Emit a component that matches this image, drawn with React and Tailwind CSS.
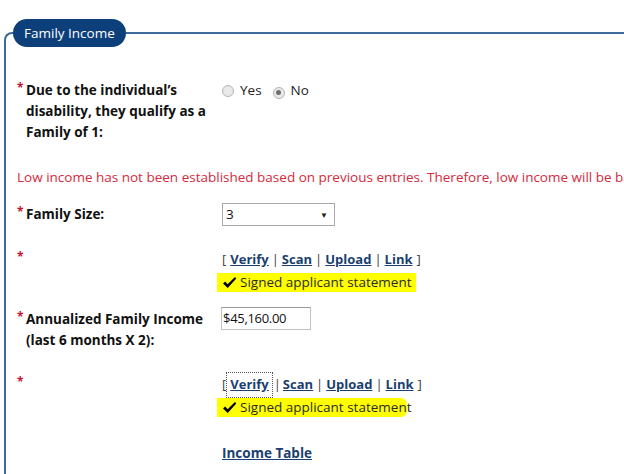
import React from "react";

const font = { fontFamily: '"Open Sans", "Noto Sans", sans-serif' };

function Check() {
  return (
    <svg width="15" height="13" viewBox="0 0 15 13" className="mr-[3px] shrink-0">
      <path d="M1 7.5 L3.2 5.6 L5.6 8.3 L13 1 L14.3 2.6 L5.7 12 Z" fill="#000" />
    </svg>
  );
}

function Radio({ checked }) {
  return (
    <span className="inline-flex items-center justify-center w-[12px] h-[12px] rounded-full border border-[#b5b5b5] bg-[#e9e9e9]">
      {checked && <span className="w-[5px] h-[5px] rounded-full bg-[#6e6e6e]" />}
    </span>
  );
}

function Links({ focus }) {
  return (
    <div className="flex items-center h-[21px] text-[13px] text-[#3a3a3a] whitespace-nowrap">
      <span className="text-[#444]">[</span>
      <span className={focus ? "ml-[1px] px-[3px] outline outline-1 outline-dotted outline-[#555] h-[24px] flex items-center" : "ml-[4px]"}>
        <a className="font-bold text-[#1b3f6e] underline">Verify</a>
      </span>
      <span className={focus ? "mx-[2px]" : "mx-[3px]"}>|</span>
      <a className="font-bold text-[#1b3f6e] underline">Scan</a>
      <span className="mx-[3px]">|</span>
      <a className="font-bold text-[#1b3f6e] underline">Upload</a>
      <span className="mx-[3px]">|</span>
      <a className="font-bold text-[#1b3f6e] underline">Link</a>
      <span className="ml-[4px]">]</span>
    </div>
  );
}

function Star() {
  return <span className="text-[#c8102e] text-[12px] font-bold leading-none mt-[2px] w-[9px] shrink-0">*</span>;
}

export default function App() {
  return (
    <div className="w-[624px] h-[474px] bg-white overflow-hidden text-[#111]" style={font}>
      <div className="pt-[19px] pl-[4px]">
        <fieldset className="border-t-2 border-l-2 border-[#3d6a9b] rounded-tl-[8px] m-0 p-0 h-[460px]">
          <legend className="ml-[7px] px-0">
            <div className="h-[28px] rounded-full bg-[#0d3f7b] text-white text-[13.5px] flex items-center px-[11px] whitespace-nowrap">
              Family Income
            </div>
          </legend>

          <div className="pl-[11px]">
            {/* Row 1 */}
            <div className="flex mt-[33px]">
              <div className="flex w-[205px]">
                <Star />
                <div className="font-bold text-[13.5px] leading-[21px] whitespace-nowrap">
                  Due to the individual’s<br />disability, they qualify as a<br />Family of 1:
                </div>
              </div>
              <div className="flex items-center h-[21px] text-[13.5px] text-[#222]">
                <Radio />
                <span className="ml-[6px]">Yes</span>
                <span className="ml-[11px]"><Radio checked /></span>
                <span className="ml-[6px]">No</span>
              </div>
            </div>

            <div className="mt-[24px] text-[13.5px] leading-[21px] text-[#d42a3c] whitespace-nowrap">
              Low income has not been established based on previous entries. Therefore, low income will be based on the family size.
            </div>

            {/* Family size */}
            <div className="flex mt-[15px]">
              <div className="flex w-[205px] pt-[1px]">
                <Star />
                <div className="font-bold text-[13.5px] leading-[21px]">Family Size:</div>
              </div>
              <div className="w-[113px] h-[23px] border border-[#a8a8a8] flex items-center justify-between pl-[3px] pr-[6px] text-[13.5px]">
                <span>3</span>
                <span className="text-[8px] text-[#222]">▼</span>
              </div>
            </div>

            {/* Verify 1 */}
            <div className="flex mt-[23px]">
              <div className="flex w-[205px]">
                <Star />
              </div>
              <div>
                <Links />
                <div className="flex items-center h-[19px] mt-[3px] -ml-[5px] pl-[5px] pr-[5px] w-fit bg-[#ffff00] text-[13.5px] text-[#2a2a2a] whitespace-nowrap">
                  <Check />
                  <span>Signed applicant statement</span>
                </div>
              </div>
            </div>

            {/* Annualized */}
            <div className="flex mt-[15px]">
              <div className="flex w-[204px] pt-[2px]">
                <Star />
                <div className="font-bold text-[13.5px] leading-[21px] whitespace-nowrap">
                  Annualized Family Income<br />(last 6 months X 2):
                </div>
              </div>
              <div className="w-[90px] h-[23px] border border-[#c2c2c2] border-t-[#9a9a9a] flex items-center pl-[1px] text-[13px] tracking-[-0.3px]">
                $45,160.00
              </div>
            </div>

            {/* Verify 2 */}
            <div className="flex mt-[23px]">
              <div className="flex w-[205px]">
                <Star />
              </div>
              <div>
                <Links focus />
                <div className="flex items-center h-[19px] mt-[3px] text-[13.5px] text-[#2a2a2a] whitespace-nowrap">
                  <div className="flex items-center -ml-[5px] pl-[5px] bg-[#ffff00] rounded-r-[6px] h-[19px]">
                    <Check />
                    <span>Signed applicant statemen</span>
                  </div>
                  <span>t</span>
                </div>
              </div>
            </div>

            <div className="flex mt-[26px]">
              <div className="w-[205px]" />
              <a className="font-bold text-[13.5px] leading-[21px] text-[#1b3f6e] underline">Income Table</a>
            </div>
          </div>
        </fieldset>
      </div>
    </div>
  );
}
